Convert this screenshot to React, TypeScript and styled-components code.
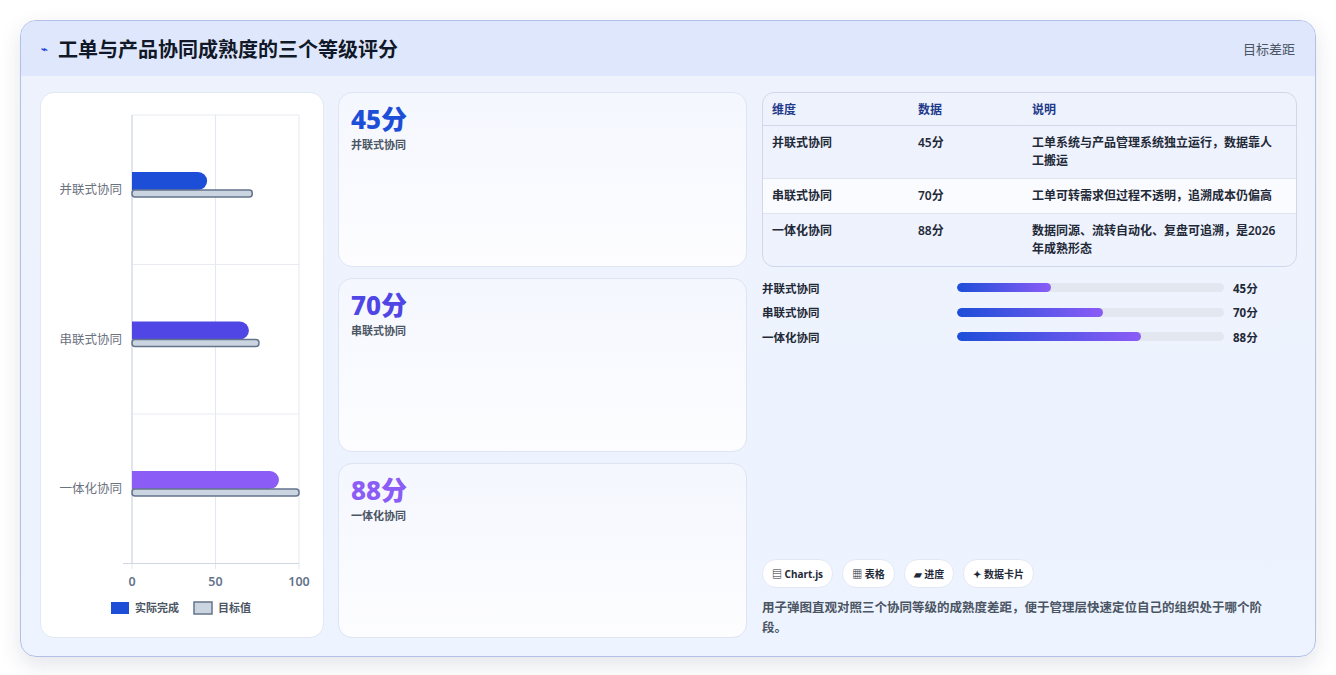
import React from "react";
import styled, { createGlobalStyle } from "styled-components";

const Global = createGlobalStyle`
  body { margin: 0; background: #fff; font-family: "Noto Sans", "Noto Sans CJK SC", sans-serif; }
`;

const Page = styled.div`
  padding: 20px 20px 18px 20px;
  height: 675px;
  box-sizing: border-box;
`;

const Card = styled.div`
  height: 637px;
  box-sizing: border-box;
  border: 1px solid #b4bfe8;
  border-radius: 16px;
  background: linear-gradient(180deg, #eef2fd 0%, #edf4ff 100%);
  box-shadow: 0 8px 22px rgba(30, 40, 90, 0.12);
  overflow: hidden;
  display: flex;
  flex-direction: column;
`;

const Header = styled.div`
  height: 55px;
  flex: none;
  background: #dfe7fc;
  display: flex;
  align-items: center;
  justify-content: space-between;
  padding: 0 20px 0 20px;
`;

const Title = styled.h1`
  margin: 0;
  font-size: 20px;
  font-weight: 700;
  color: #111827;
  display: flex;
  align-items: center;
  gap: 10px;
`;

const Icon = styled.span`
  color: #2848d8;
  font-size: 11px;
`;

const HeadLink = styled.span`
  font-size: 13px;
  color: #4b5563;
`;

const Body = styled.div`
  flex: 1;
  min-height: 0;
  display: grid;
  grid-template-columns: 284px 409px 1fr;
  grid-template-rows: minmax(0, 1fr);
  gap: 14px;
  padding: 16px 18px 18px 19px;
`;

const Panel = styled.div`
  background: #fff;
  border: 1px solid #e1e7f3;
  border-radius: 14px;
  overflow: hidden;
`;

const Middle = styled.div`
  display: grid;
  grid-template-rows: 1fr 1fr 1fr;
  gap: 11px;
  min-height: 0;
`;

const ScoreCard = styled.div`
  background: linear-gradient(180deg, #f4f7fe 0%, #fdfdff 100%);
  border: 1px solid #dde4f2;
  border-radius: 14px;
  padding: 9px 12px;
`;

const Score = styled.div<{ $c: string }>`
  font-size: 26px;
  font-weight: 800;
  color: ${(p) => p.$c};
  line-height: 34px;
`;

const ScoreLabel = styled.div`
  font-size: 11px;
  font-weight: 600;
  color: #4b5563;
`;

const Right = styled.div`
  display: flex;
  flex-direction: column;
  padding-left: 1px;
  min-height: 0;
`;

const Table = styled.table`
  width: 100%;
  table-layout: fixed;
  border-collapse: separate;
  border-spacing: 0;
  border: 1px solid #cfd8ea;
  border-radius: 12px;
  overflow: hidden;
  font-size: 12px;
  color: #1f2937;
  font-weight: 600;
`;

const Th = styled.th<{ $w?: number }>`
  text-align: left;
  color: #1e3a8a;
  font-weight: 700;
  height: 32px;
  padding: 0 9px;
  width: ${(p) => (p.$w ? `${p.$w}px` : "auto")};
  border-bottom: 1px solid #cfd8ea;
`;

const Td = styled.td<{ $alt?: boolean }>`
  padding: 8px 20px 8px 9px;
  vertical-align: top;
  line-height: 18px;
  background: ${(p) => (p.$alt ? "#fafbff" : "transparent")};
  border-bottom: 1px solid #dfe5f1;
  tr:last-child & { border-bottom: none; }
`;

const Bars = styled.div`
  margin-top: 12px;
  display: flex;
  flex-direction: column;
  gap: 7px;
`;

const BarRow = styled.div`
  display: grid;
  grid-template-columns: 186px 267px 1fr;
  align-items: center;
  gap: 9px;
  font-size: 11.5px;
  font-weight: 700;
  color: #1f2937;
  height: 17.5px;
`;

const Track = styled.div`
  height: 9px;
  border-radius: 5px;
  background: #e2e7f0;
  overflow: hidden;
`;

const Fill = styled.div`
  height: 100%;
  border-radius: 5px;
  background: linear-gradient(90deg, #1d4ed8, #8b5cf6);
`;

const Chips = styled.div`
  margin-top: auto;
  display: flex;
  gap: 9px;
`;

const Chip = styled.span`
  background: #fff;
  border: 1px solid #e3e8f3;
  border-radius: 14px;
  padding: 6px 9px;
  font-size: 10px;
  font-weight: 700;
  color: #1f2937;
`;

const Desc = styled.p`
  margin: 10px 0 0;
  font-size: 12.5px;
  line-height: 20px;
  color: #4b5563;
  font-weight: 600;
  padding-right: 12px;
`;

const rows = [
  { name: "并联式协同", v: 45, t: 72, c: "#1d4ed8", d: "工单系统与产品管理系统独立运行，数据靠人工搬运" },
  { name: "串联式协同", v: 70, t: 76, c: "#4f46e5", d: "工单可转需求但过程不透明，追溯成本仍偏高" },
  { name: "一体化协同", v: 88, t: 100, c: "#8b5cf6", d: "数据同源、流转自动化、复盘可追溯，是2026年成熟形态" },
];

const Chart = () => {
  const x0 = 91, w = 167, top = 22, band = 149.5;
  const sx = (v: number) => x0 + (v * w) / 100;
  return (
    <svg width="284" height="542" fontFamily="Noto Sans, Noto Sans CJK SC, sans-serif">
      {[0, 50, 100].map((v) => (
        <line key={v} x1={sx(v)} x2={sx(v)} y1={top} y2={476} stroke="#e3e7ef" />
      ))}
      {[0, 1, 2, 3].map((i) => (
        <line key={i} x1={i === 3 ? 82 : x0} x2={258} y1={top + i * band} y2={top + i * band} stroke={i === 3 ? "#cfd6e4" : "#e8ebf1"} />
      ))}
      <line x1={x0} x2={x0} y1={top} y2={470} stroke="#cfd6e4" />
      {rows.map((r, i) => {
        const y = top + i * band + 57;
        return (
          <g key={r.name}>
            <text x={81} y={y + 22} fontSize="12.5" fill="#6b7280" textAnchor="end">{r.name}</text>
            <path d={`M${x0} ${y} H${sx(r.v) - 9} a9 9 0 0 1 0 18 H${x0} Z`} fill={r.c} />
            <rect x={x0} y={y + 18} width={sx(r.t) - x0} height={7} rx={3} fill="#cbd5e1" stroke="#64748b" strokeWidth="1.5" />
          </g>
        );
      })}
      {[0, 50, 100].map((v) => (
        <text key={v} x={sx(v)} y={493} fontSize="12.5" fontWeight="600" fill="#64748b" textAnchor="middle">{v}</text>
      ))}
      <rect x={70} y={509} width={18} height={12} fill="#1d4ed8" />
      <text x={94} y={519} fontSize="11" fill="#4b5563" fontWeight="600">实际完成</text>
      <rect x={153} y={509} width={18} height={12} fill="#cbd5e1" stroke="#64748b" strokeWidth="1.5" />
      <text x={177} y={519} fontSize="11" fill="#4b5563" fontWeight="600">目标值</text>
    </svg>
  );
};

export default function App() {
  return (
    <>
      <Global />
      <Page>
        <Card>
          <Header>
            <Title><Icon>⌁</Icon>工单与产品协同成熟度的三个等级评分</Title>
            <HeadLink>目标差距</HeadLink>
          </Header>
          <Body>
            <Panel><Chart /></Panel>
            <Middle>
              {rows.map((r) => (
                <ScoreCard key={r.name}>
                  <Score $c={r.c}>{r.v}分</Score>
                  <ScoreLabel>{r.name}</ScoreLabel>
                </ScoreCard>
              ))}
            </Middle>
            <Right>
              <Table>
                <thead>
                  <tr><Th $w={128}>维度</Th><Th $w={96}>数据</Th><Th>说明</Th></tr>
                </thead>
                <tbody>
                  {rows.map((r, i) => (
                    <tr key={r.name}>
                      <Td $alt={i === 1}>{r.name}</Td>
                      <Td $alt={i === 1}>{r.v}分</Td>
                      <Td $alt={i === 1}>{r.d}</Td>
                    </tr>
                  ))}
                </tbody>
              </Table>
              <Bars>
                {rows.map((r) => (
                  <BarRow key={r.name}>
                    <span>{r.name}</span>
                    <Track><Fill style={{ width: `${(r.v / 128) * 100}%` }} /></Track>
                    <span>{r.v}分</span>
                  </BarRow>
                ))}
              </Bars>
              <Chips>
                <Chip>▤ Chart.js</Chip>
                <Chip>▦ 表格</Chip>
                <Chip>▰ 进度</Chip>
                <Chip>✦ 数据卡片</Chip>
              </Chips>
              <Desc>用子弹图直观对照三个协同等级的成熟度差距，便于管理层快速定位自己的组织处于哪个阶段。</Desc>
            </Right>
          </Body>
        </Card>
      </Page>
    </>
  );
}
